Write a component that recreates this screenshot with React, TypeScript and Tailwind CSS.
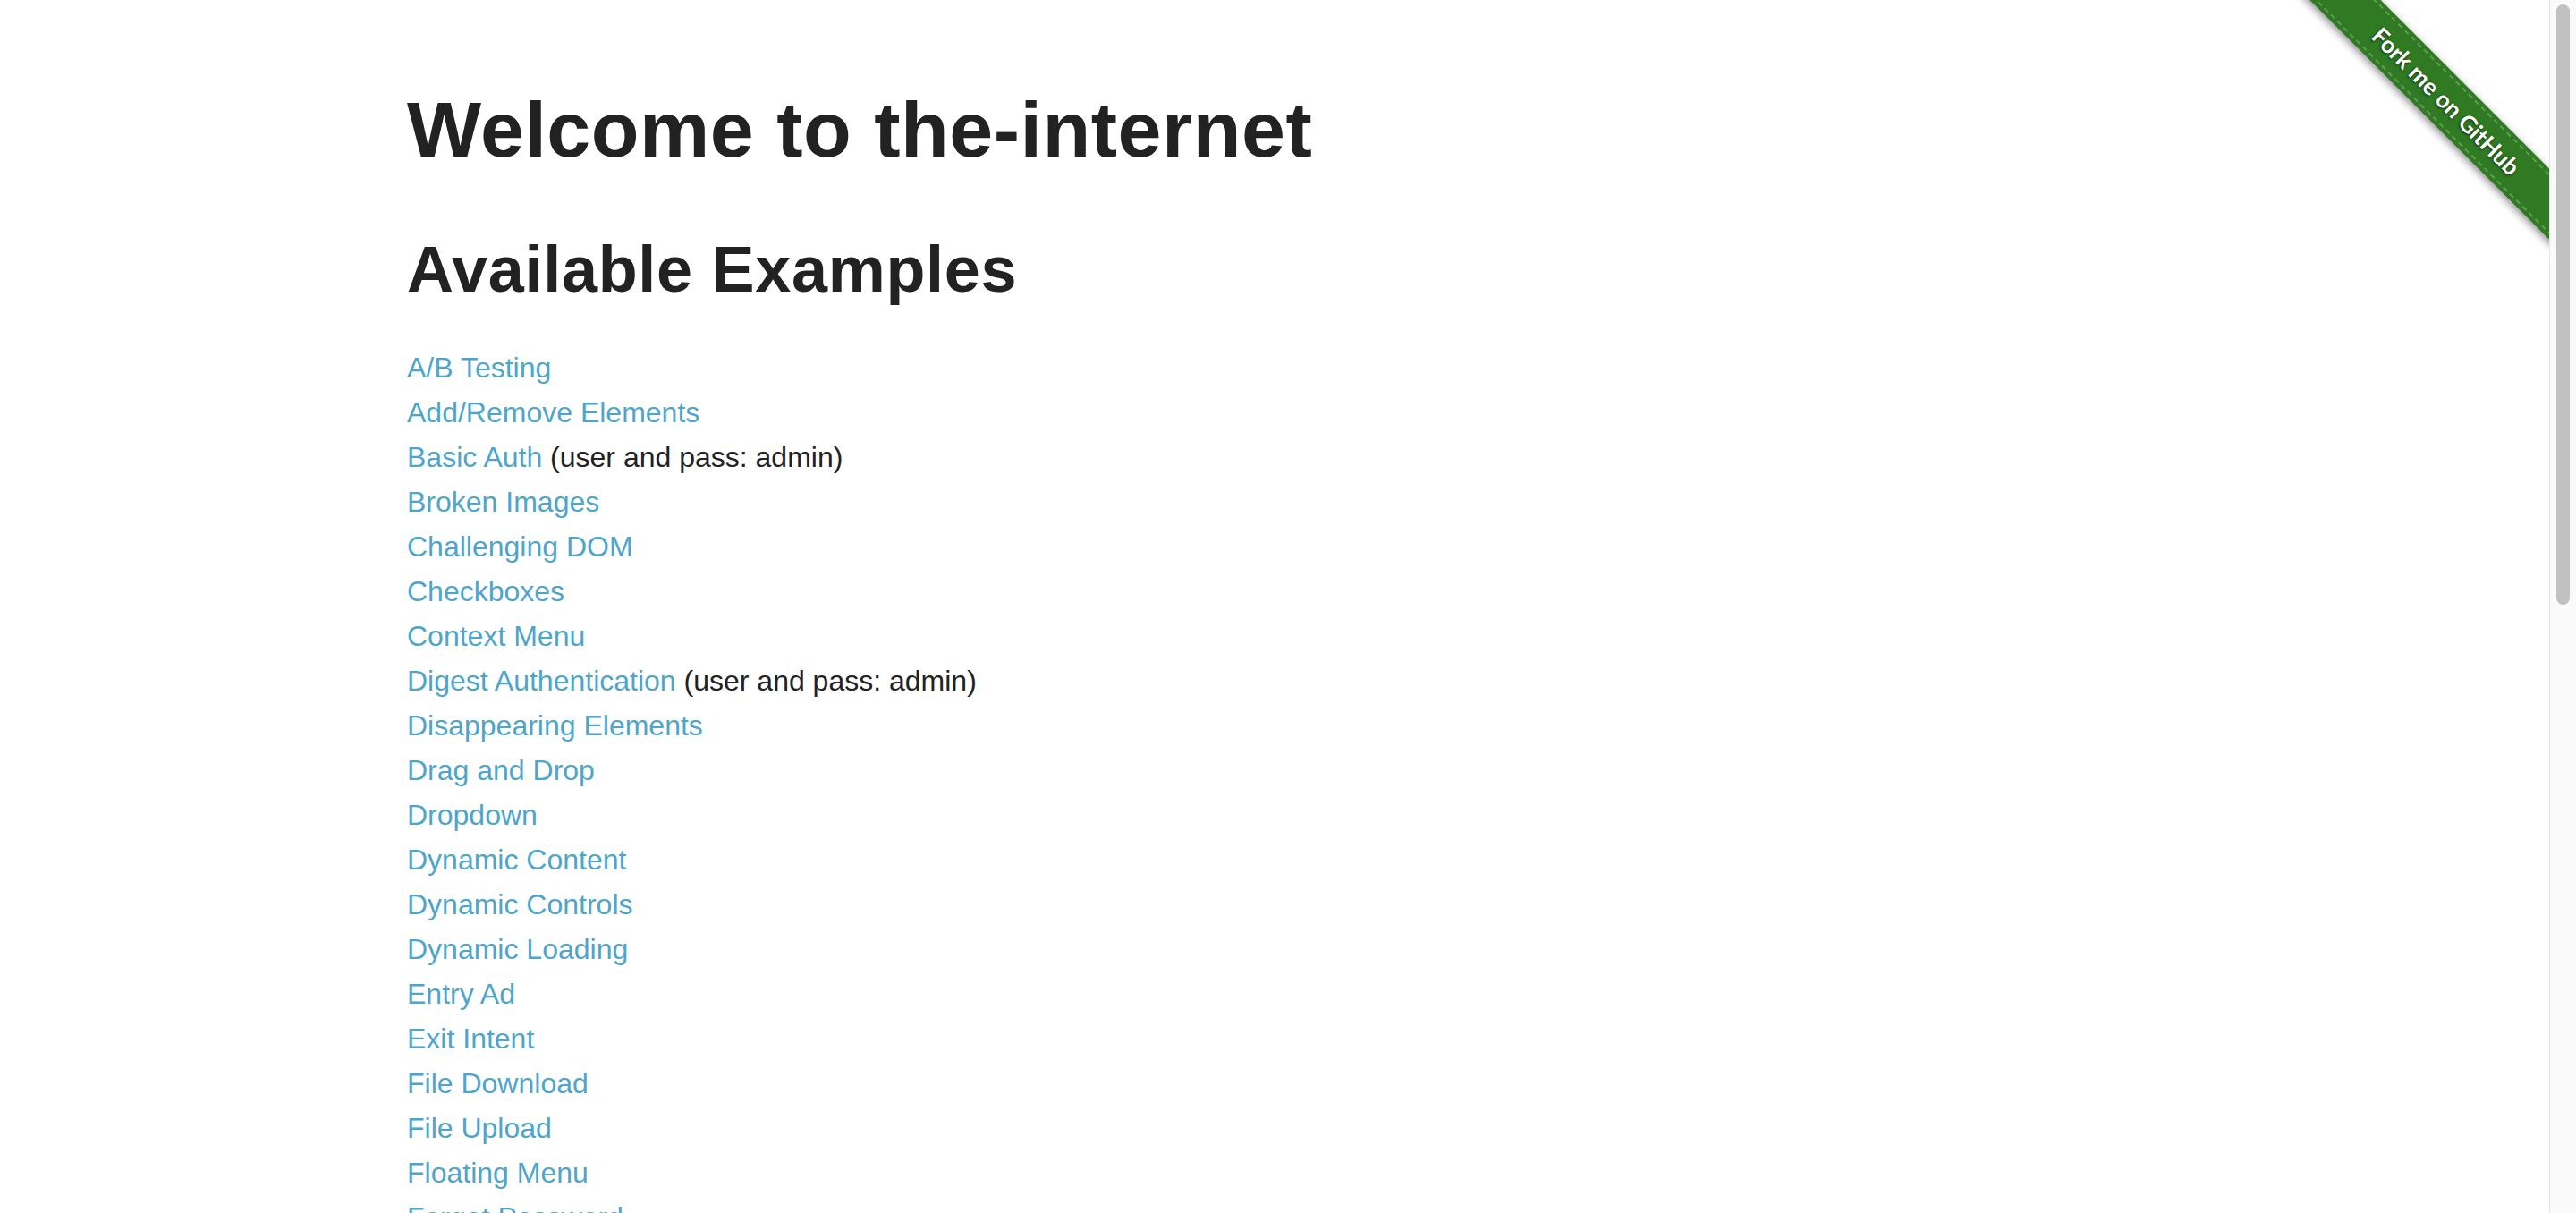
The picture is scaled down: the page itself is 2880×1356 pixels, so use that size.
import React from 'react';

interface Example {
  title: string;
  note?: string;
}

const examples: Example[] = [
  { title: 'A/B Testing' },
  { title: 'Add/Remove Elements' },
  { title: 'Basic Auth', note: '(user and pass: admin)' },
  { title: 'Broken Images' },
  { title: 'Challenging DOM' },
  { title: 'Checkboxes' },
  { title: 'Context Menu' },
  { title: 'Digest Authentication', note: '(user and pass: admin)' },
  { title: 'Disappearing Elements' },
  { title: 'Drag and Drop' },
  { title: 'Dropdown' },
  { title: 'Dynamic Content' },
  { title: 'Dynamic Controls' },
  { title: 'Dynamic Loading' },
  { title: 'Entry Ad' },
  { title: 'Exit Intent' },
  { title: 'File Download' },
  { title: 'File Upload' },
  { title: 'Floating Menu' },
  { title: 'Forgot Password' },
  { title: 'Form Authentication' },
  { title: 'Frames' },
  { title: 'Geolocation' },
  { title: 'Horizontal Slider' },
  { title: 'Hovers' },
  { title: 'Infinite Scroll' },
  { title: 'Inputs' },
  { title: 'JQuery UI Menus' },
  { title: 'JavaScript Alerts' },
  { title: 'JavaScript onload event error' },
  { title: 'Key Presses' },
  { title: 'Large & Deep DOM' },
  { title: 'Multiple Windows' },
  { title: 'Nested Frames' },
  { title: 'Notification Messages' },
  { title: 'Redirect Link' },
  { title: 'Secure File Download' },
  { title: 'Shadow DOM' },
  { title: 'Shifting Content' },
  { title: 'Slow Resources' },
  { title: 'Sortable Data Tables' },
  { title: 'Status Codes' },
  { title: 'Typos' },
  { title: 'WYSIWYG Editor' },
];

const ForkRibbon = () => (
  <div className="pointer-events-none absolute right-0 top-0 h-[300px] w-[300px] overflow-hidden">
    <a
      href="#"
      className="pointer-events-auto absolute left-[-15px] top-[85px] flex h-[56px] w-[400px] rotate-45 items-center justify-center bg-[#2f7a22] shadow-[0_3px_10px_rgba(0,0,0,0.45)]"
    >
      <span className="absolute inset-x-0 top-[4px] border-t-2 border-dashed border-[#7fb372]/60" />
      <span className="absolute inset-x-0 bottom-[4px] border-b-2 border-dashed border-[#7fb372]/60" />
      <span className="text-[26px] font-bold leading-none text-white [font-family:Lato,sans-serif] [text-shadow:0_1px_3px_rgba(0,0,0,0.7)]">
        Fork me on GitHub
      </span>
    </a>
  </div>
);

export default function App() {
  return (
    <div className="flex h-screen w-full overflow-hidden bg-white [font-family:'Liberation_Sans',Arial,sans-serif]">
      <div className="relative flex-1 overflow-hidden">
        <div className="mx-auto max-w-[2000px] px-[30px] pt-[92px]">
          <h1 className="text-[88px] font-bold leading-[106px] tracking-[0.5px] text-[#222222]">
            Welcome to the-internet
          </h1>
          <h2 className="mt-[60px] text-[72px] font-bold leading-[86px] tracking-[0.7px] text-[#222222]">
            Available Examples
          </h2>
          <ul className="mt-[42px]">
            {examples.map((ex) => (
              <li key={ex.title} className="text-[32px] leading-[50px] text-[#222222]">
                <a href="#" className="text-[#4ea5cc]">
                  {ex.title}
                </a>
                {ex.note && <span> {ex.note}</span>}
              </li>
            ))}
          </ul>
        </div>
        <ForkRibbon />
      </div>
      <div className="h-full w-[30px] border-l border-[#e6e6e6] bg-[#fafafa] pl-[7px] pt-[5px]">
        <div className="h-[671px] w-[15px] rounded-full bg-[#c1c1c1]" />
      </div>
    </div>
  );
}
